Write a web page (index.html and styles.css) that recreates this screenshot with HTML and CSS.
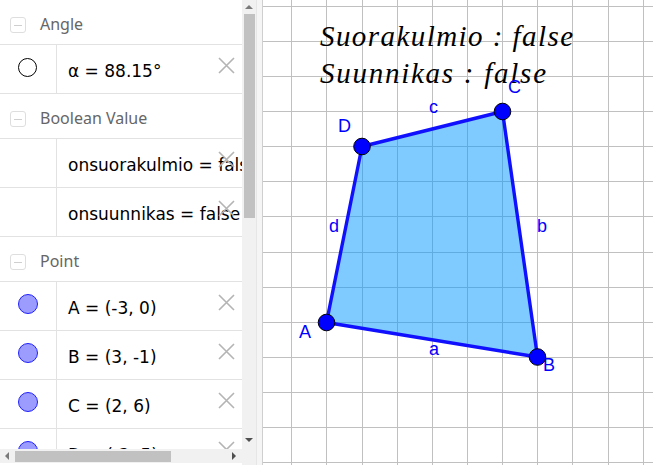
FILE: index.html
```html
<!DOCTYPE html>
<html>
<head>
<meta charset="utf-8">
<link rel="stylesheet" href="styles.css">
</head>
<body>
<div class="app">
  <div class="algebra">
    <div class="left-col">
      <div class="list">
        <div class="group-head"><span class="toggle"><span class="minus"></span></span><span class="gtitle">Angle</span></div>
        <div class="item">
          <div class="marker"><span class="dot dot-angle"></span></div>
          <div class="content"><span class="formula">α = 88.15°</span>
            <svg class="del" viewBox="0 0 17 17"><path d="M1 1L16 16M16 1L1 16"/></svg></div>
        </div>
        <div class="group-head"><span class="toggle"><span class="minus"></span></span><span class="gtitle">Boolean Value</span></div>
        <div class="item">
          <div class="marker"></div>
          <div class="content"><span class="formula">onsuorakulmio = false</span>
            <svg class="del" viewBox="0 0 17 17"><path d="M1 1L16 16M16 1L1 16"/></svg></div>
        </div>
        <div class="item">
          <div class="marker"></div>
          <div class="content"><span class="formula">onsuunnikas = false</span>
            <svg class="del" viewBox="0 0 17 17"><path d="M1 1L16 16M16 1L1 16"/></svg></div>
        </div>
        <div class="group-head"><span class="toggle"><span class="minus"></span></span><span class="gtitle">Point</span></div>
        <div class="item">
          <div class="marker"><span class="dot dot-point"></span></div>
          <div class="content"><span class="formula">A = (-3, 0)</span>
            <svg class="del" viewBox="0 0 17 17"><path d="M1 1L16 16M16 1L1 16"/></svg></div>
        </div>
        <div class="item">
          <div class="marker"><span class="dot dot-point"></span></div>
          <div class="content"><span class="formula">B = (3, -1)</span>
            <svg class="del" viewBox="0 0 17 17"><path d="M1 1L16 16M16 1L1 16"/></svg></div>
        </div>
        <div class="item">
          <div class="marker"><span class="dot dot-point"></span></div>
          <div class="content"><span class="formula">C = (2, 6)</span>
            <svg class="del" viewBox="0 0 17 17"><path d="M1 1L16 16M16 1L1 16"/></svg></div>
        </div>
        <div class="item">
          <div class="marker"><span class="dot dot-point"></span></div>
          <div class="content"><span class="formula">D = (-2, 5)</span>
            <svg class="del" viewBox="0 0 17 17"><path d="M1 1L16 16M16 1L1 16"/></svg></div>
        </div>
      </div>
      <div class="hscroll">
        <span class="harrow"><span class="tri-left"></span></span>
        <span class="hthumb"></span>
        <span class="hspace"></span>
        <span class="harrow harrow-r"><span class="tri-right"></span></span>
      </div>
    </div>
    <div class="vscroll">
      <span class="varrow"><span class="tri-up"></span></span>
      <span class="vthumb"></span>
      <span class="vspace"></span>
      <span class="varrow varrow-d"><span class="tri-down"></span></span>
    </div>
  </div>
  <div class="divider"></div>
  <div class="canvas">
    <svg class="graph" viewBox="0 0 390 465" width="390" height="465">
      <g class="grid">
        <path d="M28.5 0V465M63.5 0V465M99.5 0V465M134.5 0V465M169.5 0V465M204.5 0V465M239.5 0V465M274.5 0V465M309.5 0V465M345.5 0V465M380.5 0V465"/>
        <path d="M0 6.5H390M0 41.5H390M0 76.5H390M0 111.5H390M0 146.5H390M0 181.5H390M0 216.5H390M0 252.5H390M0 287.5H390M0 322.5H390M0 357.5H390M0 392.5H390M0 427.5H390M0 462.5H390"/>
      </g>
      <text class="latex" x="57" y="46" textLength="253" lengthAdjust="spacing">Suorakulmio : false</text>
      <text class="latex" x="57" y="83" textLength="226" lengthAdjust="spacing">Suunnikas : false</text>
      <polygon class="poly" points="63.5,322.5 274.5,357 239.5,111.5 99,146.5"/>
      <g class="labels">
        <text x="36" y="338">A</text>
        <text x="280" y="371">B</text>
        <text x="245" y="93">C</text>
        <text x="75" y="132">D</text>
        <text x="166" y="355">a</text>
        <text x="274" y="232">b</text>
        <text x="166" y="113">c</text>
        <text x="66" y="232">d</text>
      </g>
      <g class="pts">
        <circle cx="63.5" cy="322.5" r="8.3"/>
        <circle cx="274.5" cy="357" r="8.3"/>
        <circle cx="239.5" cy="111.5" r="8.3"/>
        <circle cx="99" cy="146.5" r="8.3"/>
      </g>
    </svg>
  </div>
</div>
</body>
</html>
```

FILE: styles.css
```css
* { box-sizing: border-box; }
html, body { margin: 0; padding: 0; }
body {
  width: 653px;
  height: 465px;
  overflow: hidden;
  background: #ffffff;
  font-family: "DejaVu Sans", sans-serif;
}
.app { display: flex; height: 465px; }

.algebra { width: 256px; display: flex; flex: none; }
.left-col { width: 242px; display: flex; flex-direction: column; }
.list { height: 449px; overflow: hidden; background: #fff; }

.group-head {
  height: 45px;
  border-bottom: 1px solid #e2e2e2;
  display: flex;
  align-items: flex-start;
  padding: 14px 0 0 10px;
}
.toggle {
  width: 16px; height: 16px;
  margin-top: 3px;
  border: 1px solid #dedede;
  border-radius: 3px;
  display: flex; align-items: center; justify-content: center;
  flex: none;
}
.minus { width: 8px; height: 1px; background: #cfcfcf; }
.gtitle {
  margin-left: 14px;
  font-family: "Noto Sans", sans-serif;
  font-size: 16px;
  line-height: 20px;
  color: #666666;
  white-space: nowrap;
}

.item {
  height: 49px;
  border-bottom: 1px solid #e2e2e2;
  display: flex;
}
.marker {
  width: 57px;
  flex: none;
  border-right: 1px solid #e2e2e2;
  padding: 12px 0 0 18px;
}
.dot { display: block; width: 20px; height: 20px; border-radius: 50%; }
.dot-angle { border: 1px solid #000; background: #fff; width: 19px; height: 19px; margin-top: 1px; }
.dot-point { border: 1px solid #2020ff; background: #9c9cff; }

.content {
  position: relative;
  flex: 1;
  min-width: 0;
  padding: 16px 0 0 11px;
  overflow: hidden;
}
.formula {
  font-size: 17px;
  line-height: 20px;
  color: #000;
  white-space: nowrap;
}
.del {
  position: absolute;
  right: 7px;
  top: 12px;
  width: 17px;
  height: 17px;
}
.del path { stroke: #b4b4b4; stroke-width: 1.6; fill: none; }

.hscroll {
  height: 14px;
  background: #f1f1f1;
  display: flex;
  align-items: center;
}
.harrow { width: 14px; height: 14px; display: flex; align-items: center; justify-content: center; flex: none; }
.harrow-r { margin-right: 1px; }
.tri-left { width: 0; height: 0; border-top: 4px solid transparent; border-bottom: 4px solid transparent; border-right: 4px solid #7a7a7a; }
.tri-right { width: 0; height: 0; border-top: 4px solid transparent; border-bottom: 4px solid transparent; border-left: 4px solid #505050; }
.hthumb { width: 156px; height: 11px; background: #c1c1c1; margin-left: 1px; }
.hspace { flex: 1; }

.vscroll {
  width: 14px;
  height: 465px;
  background: #f1f1f1;
  display: flex;
  flex-direction: column;
  align-items: center;
}
.varrow { width: 14px; height: 14px; display: flex; align-items: center; justify-content: center; flex: none; }
.varrow-d { margin-bottom: 18px; }
.tri-up { width: 0; height: 0; border-left: 4px solid transparent; border-right: 4px solid transparent; border-bottom: 4px solid #7a7a7a; }
.tri-down { width: 0; height: 0; border-left: 4px solid transparent; border-right: 4px solid transparent; border-top: 4px solid #505050; }
.vthumb { width: 11px; height: 204px; background: #c1c1c1; flex: none; }
.vspace { flex: 1; }

.divider {
  width: 7px;
  flex: none;
  background: #f5f5f5;
  border-left: 1px solid #e6e6e6;
  border-right: 1px solid #cfcfcf;
}

.canvas { flex: 1; height: 465px; overflow: hidden; background: #fff; }
.graph { display: block; }
.grid path { stroke: #c0c0c0; stroke-width: 1; fill: none; }
.latex {
  font-family: "Liberation Serif", serif;
  font-style: italic;
  font-size: 29px;
  fill: #000;
}
.poly { fill: rgba(0, 150, 255, 0.5); stroke: #1010ff; stroke-width: 3.4; stroke-linejoin: round; }
.labels text { font-family: "Liberation Sans", sans-serif; font-size: 18px; fill: #0000ff; }
.pts circle { fill: #0000ff; stroke: #000; stroke-width: 1; }
```
